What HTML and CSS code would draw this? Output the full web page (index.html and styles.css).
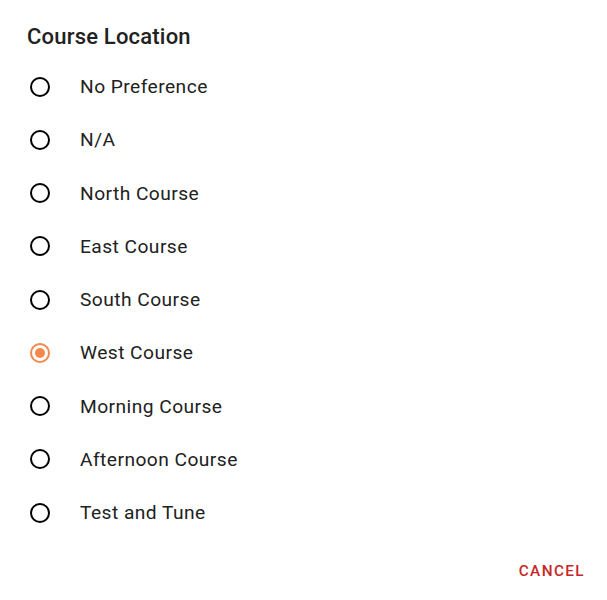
FILE: index.html
```html
<!DOCTYPE html>
<html>
<head>
<meta charset="utf-8">
<link rel="stylesheet" href="styles.css">
</head>
<body>
<div class="dialog">
  <h2 class="title">Course Location</h2>
  <ul class="options">
    <li class="option"><span class="radio"></span><span class="label">No Preference</span></li>
    <li class="option"><span class="radio"></span><span class="label">N/A</span></li>
    <li class="option"><span class="radio"></span><span class="label">North Course</span></li>
    <li class="option"><span class="radio"></span><span class="label">East Course</span></li>
    <li class="option"><span class="radio"></span><span class="label">South Course</span></li>
    <li class="option"><span class="radio checked"></span><span class="label">West Course</span></li>
    <li class="option"><span class="radio"></span><span class="label">Morning Course</span></li>
    <li class="option"><span class="radio"></span><span class="label">Afternoon Course</span></li>
    <li class="option"><span class="radio"></span><span class="label">Test and Tune</span></li>
  </ul>
  <div class="actions">
    <button class="btn">CANCEL</button>
  </div>
</div>
</body>
</html>
```
FILE: styles.css
```css
html, body {
  margin: 0;
  padding: 0;
  background: #ffffff;
}
body {
  font-family: Roboto, "Liberation Sans", sans-serif;
  color: #212121;
}
.dialog {
  width: 607px;
  height: 600px;
  box-sizing: border-box;
  display: flex;
  flex-direction: column;
}
.title {
  margin: 0;
  padding: 25px 27px 0;
  font-size: 22px;
  font-weight: 500;
  line-height: 24px;
  letter-spacing: 0.2px;
  color: #212121;
}
.options {
  list-style: none;
  margin: 0;
  padding: 0;
  margin-top: 11px;
}
.option {
  height: 53.25px;
  display: flex;
  align-items: center;
  padding-left: 30px;
}
.radio {
  width: 20px;
  height: 20px;
  box-sizing: border-box;
  border: 2px solid #000000;
  border-radius: 50%;
  display: flex;
  align-items: center;
  justify-content: center;
  flex: none;
}
.radio.checked {
  border-color: #f5874c;
}
.radio.checked::after {
  content: "";
  width: 10px;
  height: 10px;
  border-radius: 50%;
  background: #f5874c;
}
.label {
  margin-left: 30px;
  font-size: 19.2px;
  letter-spacing: 0.45px;
  color: #212121;
}
.actions {
  display: flex;
  justify-content: flex-end;
  padding: 0 22px 0 0;
  margin-top: 23px;
}
.btn {
  border: none;
  background: none;
  font-family: Roboto, "Liberation Sans", sans-serif;
  font-size: 15.3px;
  font-weight: 500;
  letter-spacing: 1.4px;
  color: #c62828;
  padding: 0;
}
```
